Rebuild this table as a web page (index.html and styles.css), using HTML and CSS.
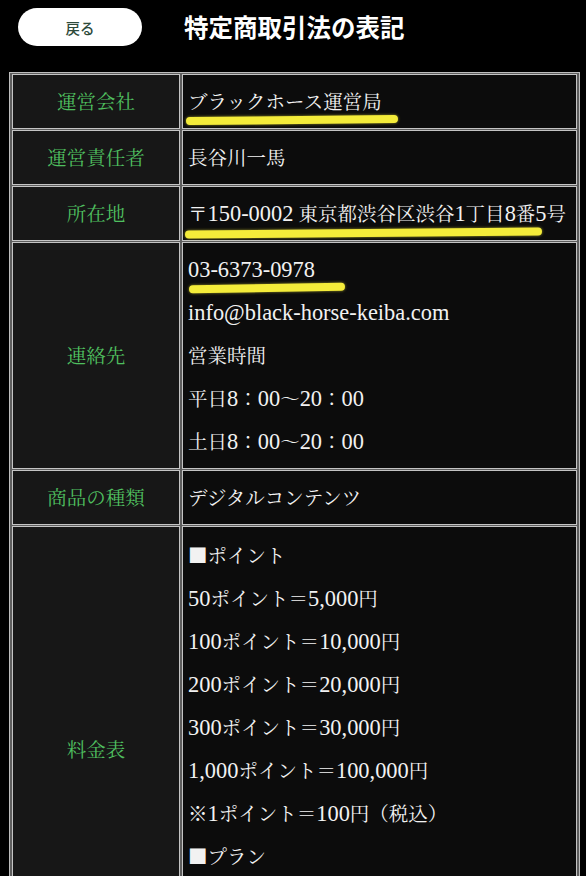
FILE: index.html
```html
<!DOCTYPE html>
<html lang="ja">
<head>
<meta charset="utf-8">
<title>特定商取引法の表記</title>
<link rel="stylesheet" href="styles.css">
</head>
<body>
<header class="top">
  <a class="back" href="#">戻る</a>
  <h1 class="title">特定商取引法の表記</h1>
</header>
<main class="wrap">
  <table class="law">
    <tr>
      <th>運営会社</th>
      <td><span class="mark m1">ブラックホース運営局</span></td>
    </tr>
    <tr>
      <th>運営責任者</th>
      <td>長谷川一馬</td>
    </tr>
    <tr>
      <th>所在地</th>
      <td><span class="mark m2">〒<span class="l">150-0002</span> 東京都渋谷区渋谷<span class="l">1</span>丁目<span class="l">8</span>番<span class="l">5</span>号</span></td>
    </tr>
    <tr>
      <th>連絡先</th>
      <td>
        <div><span class="mark m3"><span class="l">03-6373-0978</span></span></div>
        <div><span class="l">info@black-horse-keiba.com</span></div>
        <div>営業時間</div>
        <div>平日<span class="l">8</span>：<span class="l">00</span>～<span class="l">20</span>：<span class="l">00</span></div>
        <div>土日<span class="l">8</span>：<span class="l">00</span>～<span class="l">20</span>：<span class="l">00</span></div>
      </td>
    </tr>
    <tr>
      <th>商品の種類</th>
      <td>デジタルコンテンツ</td>
    </tr>
    <tr>
      <th>料金表</th>
      <td class="tall">
        <div>■ポイント</div>
        <div><span class="l">50</span>ポイント＝<span class="l">5,000</span>円</div>
        <div><span class="l">100</span>ポイント＝<span class="l">10,000</span>円</div>
        <div><span class="l">200</span>ポイント＝<span class="l">20,000</span>円</div>
        <div><span class="l">300</span>ポイント＝<span class="l">30,000</span>円</div>
        <div><span class="l">1,000</span>ポイント＝<span class="l">100,000</span>円</div>
        <div>※<span class="l">1</span>ポイント＝<span class="l">100</span>円（税込）</div>
        <div>■プラン</div>
      </td>
    </tr>
  </table>
</main>
</body>
</html>
```
FILE: styles.css
```css
html, body {
  margin: 0;
  background: #000;
}
body {
  color: #f2f2f2;
  font-family: "Noto Serif CJK JP", "Noto Sans CJK JP", serif;
}
.top {
  display: flex;
  align-items: center;
  gap: 42px;
  height: 38px;
  padding: 8px 0 0 18px;
  margin-bottom: 26px;
}
.back {
  width: 124px;
  height: 38px;
  border-radius: 19px;
  background: #fff;
  color: #2e4a3b;
  font-family: "Noto Sans CJK JP", sans-serif;
  font-size: 14.5px;
  font-weight: 500;
  display: flex;
  align-items: center;
  justify-content: center;
  text-decoration: none;
}
.title {
  margin: 0;
  font-family: "Noto Sans CJK JP", sans-serif;
  font-size: 24.5px;
  font-weight: 700;
  line-height: 1;
  color: #fff;
}
.wrap {
  padding: 0 6px 0 9px;
}
.law {
  width: 100%;
  border: 1px solid #bdbdbd;
  border-spacing: 2px 1px;
  background: #5e5e5e;
  font-size: 19.5px;
  line-height: 43px;
}
.law th {
  width: 166px;
  padding: 5px 0;
  border: 1px solid #c4c4c4;
  background: #171717;
  color: #4fbf5f;
  font-weight: 400;
  text-align: center;
  vertical-align: middle;
}
.law td {
  padding: 5px 6px 5px 5px;
  border: 1px solid #c4c4c4;
  background: #0c0c0c;
  vertical-align: top;
  white-space: nowrap;
}
.law td.tall {
  padding-top: 7px;
  padding-bottom: 93px;
}
.l {
  font-family: "Liberation Serif", serif;
  font-size: 1.15em;
}
.mark {
  position: relative;
  display: inline-block;
}
.mark::after {
  content: "";
  position: absolute;
  height: 8px;
  border-radius: 4px;
  background: #f4ec3a;
  box-shadow: 0 0 3px rgba(244, 236, 58, 0.6);
}
.m1::after {
  top: 36px;
  left: -2px;
  width: 212px;
  transform: rotate(-0.6deg);
}
.m2::after {
  top: 37px;
  left: -3px;
  width: 357px;
  transform: rotate(-0.5deg);
}
.m3::after {
  top: 36px;
  left: 1px;
  width: 156px;
  transform: rotate(-1deg);
}
```
